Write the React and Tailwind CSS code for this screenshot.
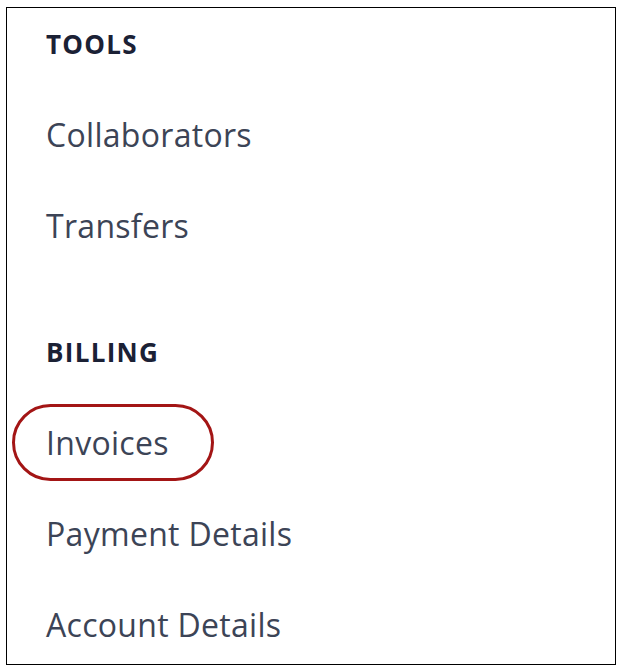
const SECTIONS = [
  { title: 'TOOLS', items: ['Collaborators', 'Transfers'] },
  { title: 'BILLING', items: ['Invoices', 'Payment Details', 'Account Details'] },
]

const NavItem = ({ label, circled }) => (
  <div className="relative mt-[51px] w-fit text-[32px] leading-[40px] tracking-[0.3px] text-[#3c4456]">
    {label}
    {circled && (
      <span className="absolute left-[-34px] top-[-19px] h-[77px] w-[202px] rounded-[40px] border-[3px] border-[#a31515]" />
    )}
  </div>
)

export default function App() {
  return (
    <div className="h-[670px] w-[618px] bg-white pl-[6px] pt-[7px]" style={{ fontFamily: '"Open Sans", sans-serif' }}>
      <div className="h-[658px] w-[610px] border-[1.5px] border-black pl-[39px] pt-[16px]">
        {SECTIONS.map((section, i) => (
          <div key={section.title} className={i > 0 ? 'mt-[86px]' : ''}>
            <div className="text-[26px] font-bold leading-[40px] tracking-[1.3px] text-[#1b2135]">{section.title}</div>
            {section.items.map(item => (
              <NavItem key={item} label={item} circled={item === 'Invoices'} />
            ))}
          </div>
        ))}
      </div>
    </div>
  )
}
